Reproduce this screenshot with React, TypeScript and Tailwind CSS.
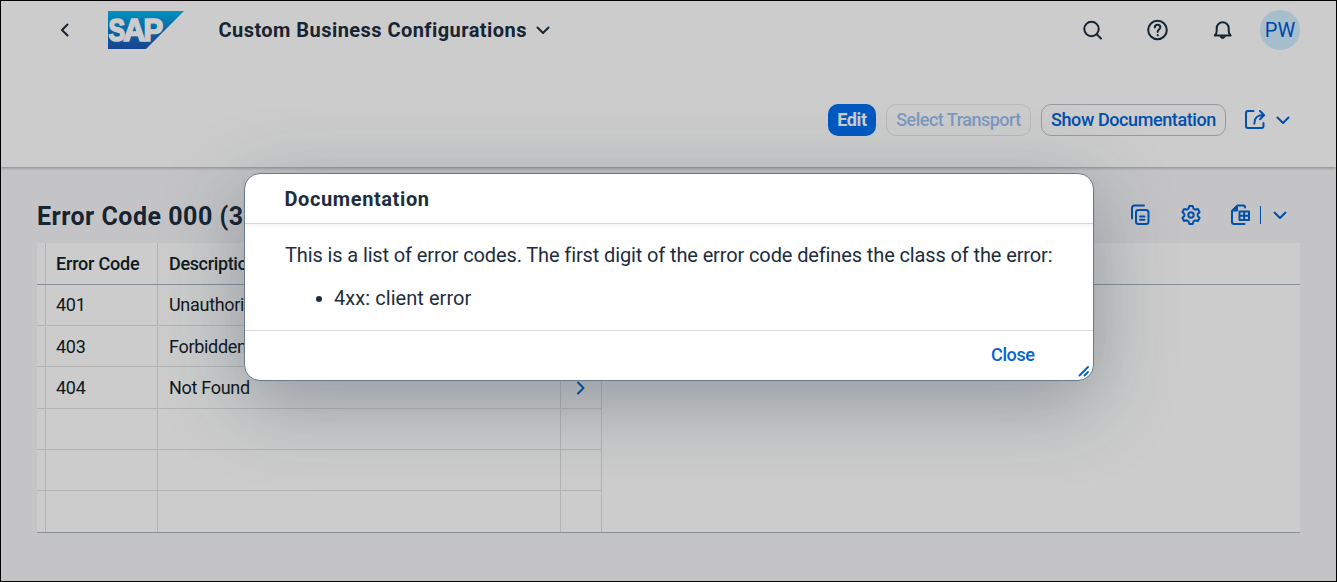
import React from "react";

const rows = [
  { code: "401", description: "Unauthorized", h: "h-[41px]" },
  { code: "403", description: "Forbidden", h: "h-[41px] pt-px" },
  { code: "404", description: "Not Found", h: "h-[42px]" },
  { code: "", description: "", h: "h-[41px]" },
  { code: "", description: "", h: "h-[41px]" },
  { code: "", description: "", h: "h-[41px]" },
];

type IconProps = { className?: string; children: React.ReactNode; w?: number; h?: number };

function Icon({ className = "", children, w = 24, h = 24 }: IconProps) {
  return (
    <svg
      width={w}
      height={h}
      viewBox={`0 0 ${w} ${h}`}
      fill="none"
      stroke="currentColor"
      strokeWidth="2"
      strokeLinecap="round"
      strokeLinejoin="round"
      className={`shrink-0 ${className}`}
    >
      {children}
    </svg>
  );
}

function ChevronDown() {
  return (
    <Icon w={16} h={16}>
      <path d="M2.5 5.5 8 11l5.500-5.500" />
    </Icon>
  );
}

function SapLogo() {
  return (
    <svg width="76" height="38" viewBox="0 0 76 38" className="shrink-0">
      <defs>
        <linearGradient id="sap" x1="0" y1="0" x2="0" y2="1">
          <stop offset="0" stopColor="#00b8f1" />
          <stop offset="0.5" stopColor="#0d7fcb" />
          <stop offset="1" stopColor="#1e55b5" />
        </linearGradient>
      </defs>
      <path d="M0 0h76L38 38H0z" fill="url(#sap)" />
      <g
        fontFamily="Liberation Sans, sans-serif"
        fontWeight="700"
        fontSize="32"
        fill="#fff"
        stroke="#fff"
        strokeWidth="1.700"
      >
        <text y="30" transform="translate(0.600 0) scale(0.780 1)">S</text>
        <text y="30" transform="translate(15.300 0) scale(0.960 1)">A</text>
        <text y="30" transform="translate(35.500 0) scale(0.920 1)">P</text>
      </g>
    </svg>
  );
}

function ShellBar() {
  return (
    <div className="flex h-[58px] items-center pl-[55px] pr-[36px] text-[#1d2d3e]">
      <Icon w={16} h={16}>
        <path d="M11.500 2.500 6 8l5.500 5.500" />
      </Icon>
      <div className="ml-[36px]">
        <SapLogo />
      </div>
      <div className="ml-[34.5px] flex items-center">
        <span className="w-[316.5px] whitespace-nowrap text-[20px] font-bold tracking-[0.450px]">
          Custom Business Configurations
        </span>
        <ChevronDown />
      </div>
      <div className="ml-auto flex items-center">
        <Icon>
          <circle cx="11.500" cy="11" r="7.200" />
          <path d="m16.700 16.200 4.300 4.300" />
        </Icon>
        <Icon className="ml-[41px]">
          <circle cx="12.500" cy="12" r="9.300" />
          <path d="M9.800 9.500c0-1.700 1.200-2.700 2.800-2.700s2.700 1 2.700 2.500c0 2.200-2.700 2.200-2.700 4.600" />
          <circle cx="12.600" cy="17.200" r="0.600" fill="currentColor" strokeWidth="1" />
        </Icon>
        <Icon className="ml-[41px]">
          <path d="M4.800 17.500c1.300-1.300 1.900-2.600 1.900-4.500v-2.800a6 6 0 0 1 12 0V13c0 1.900.6 3.200 1.900 4.500z" />
          <path d="M10.100 18.500a2.700 2.700 0 0 0 5.200 0z" fill="currentColor" strokeWidth="1" />
        </Icon>
        <div className="ml-[26px] flex h-10 w-10 items-center justify-center rounded-full bg-[#d1efff] text-[20px] text-[#0057d2]">
          PW
        </div>
      </div>
    </div>
  );
}

function PageActions() {
  return (
    <div className="mt-[45px] flex items-center pl-[827px] text-[18px] font-medium leading-none text-[#0064d9]">
      <button className="h-8 w-[48px] rounded-[10px] bg-[#0070f2] font-bold tracking-[-0.350px] text-white">Edit</button>
      <button className="ml-[10px] h-8 w-[145px] whitespace-nowrap rounded-[10px] border border-[#bcc3ca] tracking-[-0.500px] opacity-40">
        Select Transport
      </button>
      <button className="ml-[10px] h-8 w-[185px] whitespace-nowrap rounded-[10px] border border-[#bcc3ca] tracking-[-0.400px]">
        Show Documentation
      </button>
      <Icon className="ml-[17px]">
        <path d="M10.500 3H5a2 2 0 0 0-2 2v13a2 2 0 0 0 2 2h13.500a2 2 0 0 0 2-2v-3" />
        <path d="M11.300 15.700c0-6 2.500-8.600 9.700-8.600M17 3l4.200 4.100-4.200 4.200" />
      </Icon>
      <div className="ml-[8px]">
        <ChevronDown />
      </div>
    </div>
  );
}

function TableToolbar() {
  return (
    <div className="flex h-[76px] items-center pl-[36px] pr-[12px] pt-[20px]">
      <h2 className="whitespace-nowrap pt-[3px] text-[25px] font-bold tracking-[0.500px] text-[#1d2d3e]">
        Error Code 000 (3)
      </h2>
      <div className="ml-auto flex items-center text-[#0064d9]">
        <Icon>
          <rect x="8" y="7" width="12.500" height="14" rx="2.500" />
          <path d="M4 15.500V5a2.500 2.500 0 0 1 2.500-2.500h9.500M12 13.500h4.500M12 16.800h4.500" />
        </Icon>
        <Icon className="ml-[27px]">
          <path d="M10.300 3h3.400l.8 2.700 1.700 1 2.700-.7 1.700 3-1.900 2v2l1.900 2-1.700 3-2.700-.7-1.700 1-.8 2.700h-3.400l-.8-2.700-1.700-1-2.700.7-1.700-3 1.900-2v-2l-1.900-2 1.700-3 2.700.7 1.700-1z" />
          <circle cx="12" cy="12" r="2.700" />
        </Icon>
        <Icon className="ml-[26px]">
          <path d="M16 4.500V4a1.500 1.500 0 0 0-1.500-1.500H8.500L3 8v11a2 2 0 0 0 2 2h10.500" />
          <path d="M8.500 2.500V8H3z" fill="currentColor" strokeWidth="1" />
          <path d="M10.500 8.500h9.500v8.500h-9.500zM15.200 8.500v8.500M10.500 12.700h9.500" />
        </Icon>
        <div className="ml-[7px] h-[18px] w-px bg-[#0064d9]" />
        <div className="ml-[11px] mr-[36px]">
          <ChevronDown />
        </div>
      </div>
    </div>
  );
}

function ErrorTable() {
  return (
    <div className="ml-[36px] w-[1263px] border-b border-[#a8b3bd] bg-white text-[18px] leading-none tracking-[-0.300px] text-[#131e29]">
      <div className="flex h-[42px] border-b border-[#a8b3bd] font-medium tracking-[-0.200px]">
        <div className="w-[9px] border-r border-[#e0e0e0]" />
        <div className="flex w-[112px] items-center border-r border-[#e0e0e0] pl-[10px]">Error Code</div>
        <div className="flex items-center pl-[11px] tracking-[-0.350px]">Description</div>
      </div>
      {rows.map((row, i) => (
        <div
          key={i}
          className={`flex w-[565px] border-[#e0e0e0] ${row.h} ${i < rows.length - 1 ? "border-b" : ""}`}
        >
          <div className="w-[9px] border-r border-[#e0e0e0]" />
          <div className="flex w-[112px] items-center border-r border-[#e0e0e0] pl-[10px]">{row.code}</div>
          <div className="flex w-[403px] items-center border-r border-[#e0e0e0] pl-[11px]">{row.description}</div>
          <div className="flex w-[41px] items-center justify-center border-r border-[#e0e0e0] text-[#0064d9]">
            {row.code && (
              <Icon w={16} h={16}>
                <path d="M5 2.500 10.500 8 5 13.500" />
              </Icon>
            )}
          </div>
        </div>
      ))}
    </div>
  );
}

function DocumentationDialog() {
  return (
    <div className="absolute left-[243px] top-[172px] flex h-[208px] w-[850px] flex-col rounded-[16px] border border-[#6b7a88] bg-white text-[20px] text-[#1d2d3e] shadow-[0_20px_80px_0_rgba(34,54,73,0.35)]">
      <div className="flex h-[50px] items-center border-b border-[#d9d9d9] pl-[39.5px] font-bold tracking-[0.600px] shadow-[0_2px_4px_rgba(34,54,73,0.06)]">
        Documentation
      </div>
      <div className="h-[107px] border-b border-[#d9d9d9] pl-[40px] pt-[19px] leading-[25px]">
        <p className="whitespace-nowrap tracking-[-0.120px]">
          This is a list of error codes. The first digit of the error code defines the class of the error:
        </p>
        <ul className="mt-[18px]">
          <li className="flex items-center pl-[31px]">
            <span className="mt-[1px] h-[6px] w-[6px] rounded-full bg-[#1d2d3e]" />
            <span className="ml-[12px] tracking-[0.060px]">4xx: client error</span>
          </li>
        </ul>
      </div>
      <div className="flex flex-1 items-center justify-end pb-[2px] pr-[58.5px]">
        <button className="text-[18px] font-medium tracking-[-0.400px] text-[#0064d9]">Close</button>
      </div>
      <svg
        width="12"
        height="12"
        viewBox="0 0 12 12"
        className="absolute bottom-[3px] right-[3px] text-[#0064d9]"
        fill="none"
        stroke="currentColor"
        strokeWidth="2"
        strokeLinecap="round"
      >
        <path d="M1.500 10.500l8.500-8.500M6.500 10.500l3.500-3.500" />
      </svg>
    </div>
  );
}

export default function App() {
  return (
    <div className="relative h-[582px] w-[1337px] overflow-hidden border border-black bg-[#f5f6f8] font-[Roboto,sans-serif]">
      <header className="h-[166px] bg-white shadow-[0_1px_3px_rgba(34,54,73,0.4)]">
        <ShellBar />
        <PageActions />
      </header>
      <main>
        <TableToolbar />
        <ErrorTable />
      </main>
      <div className="absolute inset-0 bg-black/20" />
      <DocumentationDialog />
    </div>
  );
}
